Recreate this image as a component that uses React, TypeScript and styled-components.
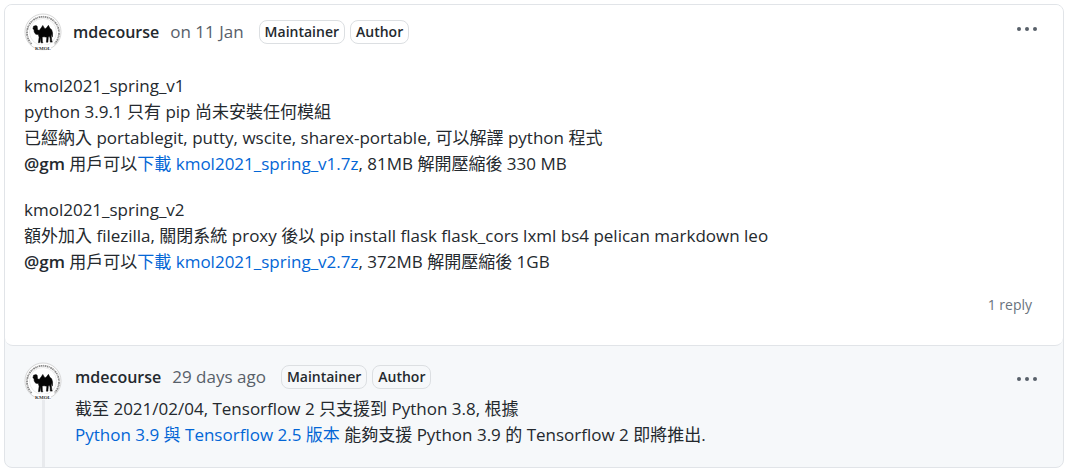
import React from "react";
import styled, { createGlobalStyle } from "styled-components";

const GlobalStyle = createGlobalStyle`
  * { box-sizing: border-box; }
  body {
    margin: 0;
    background: #fff;
    color: #24292e;
    font-family: "Open Sans", "Noto Sans CJK TC", sans-serif;
    font-size: 17px;
    line-height: 26px;
  }
`;

const Card = styled.article`
  margin: 4px 6px 6px 4px;
  border: 1px solid #e1e4e8;
  border-radius: 8px;
  background: #f6f8fa;
  overflow: hidden;
`;

const Post = styled.section`
  padding: 8px 24px 27px 19px;
  background: #fff;
  border-bottom: 1px solid #e1e4e8;
  border-radius: 0 0 8px 8px;
`;

const Header = styled.header`
  display: flex;
  align-items: center;
  height: 38px;
`;

const Author = styled.a`
  margin-right: 11px;
  color: #24292e;
  font-size: 16px;
  font-weight: 600;
  text-decoration: none;
`;

const PostAuthor = styled(Author)`
  margin-left: 11px;
`;

const Time = styled.a`
  margin-right: 15px;
  color: #586069;
  text-decoration: none;
`;

const Badges = styled.div`
  display: flex;
  gap: 5px;
`;

const Badge = styled.span`
  padding: 0 5px;
  border: 1px solid #dcdfe2;
  border-radius: 8px;
  font-size: 14px;
  font-weight: 600;
  line-height: 22px;
`;

const MenuButton = styled.button<{ $reply?: boolean }>`
  display: flex;
  margin: ${(p) => (p.$reply ? "4px 0 0 auto" : "0 0 6px auto")};
  padding: 0;
  border: 0;
  background: none;
  color: #586069;
  cursor: pointer;
`;

const Paragraph = styled.p`
  margin: 0 0 20px;
`;

const PostBody = styled.div`
  padding-top: 22px;
`;

const Link = styled.a`
  color: #0366d6;
  text-decoration: none;
`;

const Mention = styled(Link)`
  color: #24292e;
  font-weight: 600;
`;

const ReplyCount = styled.div`
  margin-top: -3px;
  padding: 0 7px 0 0;
  color: #6a737d;
  font-size: 14px;
  text-align: right;
`;

const Reply = styled.section`
  display: flex;
  gap: 13px;
  padding: 16px 24px 0 19px;
`;

const Thread = styled.div`
  display: flex;
  flex-direction: column;
  align-items: center;

  &::after {
    content: "";
    flex: 1;
    width: 3px;
    background: #e8eaed;
  }
`;

const ReplyMain = styled.div`
  flex: 1;
  padding-bottom: 19px;
`;

const ReplyHeader = styled(Header)`
  height: 30px;
  margin-bottom: 4px;
`;

const Logo = styled.svg`
  display: block;
  flex: none;
`;

const Avatar = () => (
  <Logo width="38" height="38" viewBox="0 0 38 38" role="img" aria-label="mdecourse">
    <circle cx="19" cy="19" r="18" fill="#fff" stroke="#c4c4c4" strokeWidth=".7" />
    <path d="M7.6 31A16 16 0 1 1 30.4 31" fill="none" stroke="#8a8a8a" strokeWidth="1.8" strokeDasharray="1.4 .6 .8 .7 1.8 .6" />
    <circle cx="19" cy="19" r="13.5" fill="none" stroke="#ddd" strokeWidth=".6" />
    <path
      fill="#050505"
      stroke="#050505"
      strokeWidth=".5"
      strokeLinejoin="round"
      d="M9.5 13.2 12 12.5l1.2.8.4 3.8 1.8.2 2-2.7 1.4-2.2 1.4 2.5 1 .8 1.4-.9 1.8-2.5 1.5 3 1.8 1.5.9 3.2-.2 4.1-.8-3-.3 2.4.5 4.5.5 1.1h-2l-.2-4-1-2.2-.8 1.5-.4 4.8h-1.5l.4-5-2.6-.4-2 .1.2 4.7.5 1.2H17l-.4-5.6-.7 5.4-1.5.2.7-5.6-.8-2.6-2.6-.4-1.5-2.1-.2-2.7-1.1-.4Z"
    />
    <rect x="11" y="32" width="16" height="5.6" fill="#fff" />
    <text x="19" y="37" textAnchor="middle" fill="#333" fontFamily="Liberation Serif, serif" fontSize="5" fontWeight="700">KMOL</text>
  </Logo>
);

const Menu = ({ reply }: { reply?: boolean }) => (
  <MenuButton type="button" aria-label="Show options" $reply={reply}>
    <svg width="23" height="20" viewBox="0 0 23 20" fill="currentColor" aria-hidden="true">
      <circle cx="3" cy="10" r="2" />
      <circle cx="11" cy="10" r="2" />
      <circle cx="19" cy="10" r="2" />
    </svg>
  </MenuButton>
);

const Roles = () => (
  <Badges>
    <Badge>Maintainer</Badge>
    <Badge>Author</Badge>
  </Badges>
);

export default function App() {
  return (
    <>
      <GlobalStyle />
      <Card>
        <Post>
          <Header>
            <Avatar />
            <PostAuthor href="#mdecourse">mdecourse</PostAuthor>
            <Time href="#post">on 11 Jan</Time>
            <Roles />
            <Menu />
          </Header>
          <PostBody>
            <Paragraph>
              kmol2021_spring_v1<br />
              python 3.9.1 只有 pip 尚未安裝任何模組<br />
              已經納入 portablegit, putty, wscite, sharex-portable, 可以解譯 python 程式<br />
              <Mention href="#gm">@gm</Mention> 用戶可以<Link href="#v1">下載 kmol2021_spring_v1.7z</Link>, 81MB 解開壓縮後 330 MB
            </Paragraph>
            <Paragraph>
              kmol2021_spring_v2<br />
              額外加入 filezilla, 關閉系統 proxy 後以 pip install flask flask_cors lxml bs4 pelican markdown leo<br />
              <Mention href="#gm">@gm</Mention> 用戶可以<Link href="#v2">下載 kmol2021_spring_v2.7z</Link>, 372MB 解開壓縮後 1GB
            </Paragraph>
          </PostBody>
          <ReplyCount>1 reply</ReplyCount>
        </Post>
        <Reply>
          <Thread>
            <Avatar />
          </Thread>
          <ReplyMain>
            <ReplyHeader>
              <Author href="#mdecourse">mdecourse</Author>
              <Time href="#reply">29 days ago</Time>
              <Roles />
              <Menu reply />
            </ReplyHeader>
            <div>
              截至 2021/02/04, Tensorflow 2 只支援到 Python 3.8, 根據<br />
              <Link href="#tensorflow">Python 3.9 與 Tensorflow 2.5 版本</Link> 能夠支援 Python 3.9 的 Tensorflow 2 即將推出.
            </div>
          </ReplyMain>
        </Reply>
      </Card>
    </>
  );
}
